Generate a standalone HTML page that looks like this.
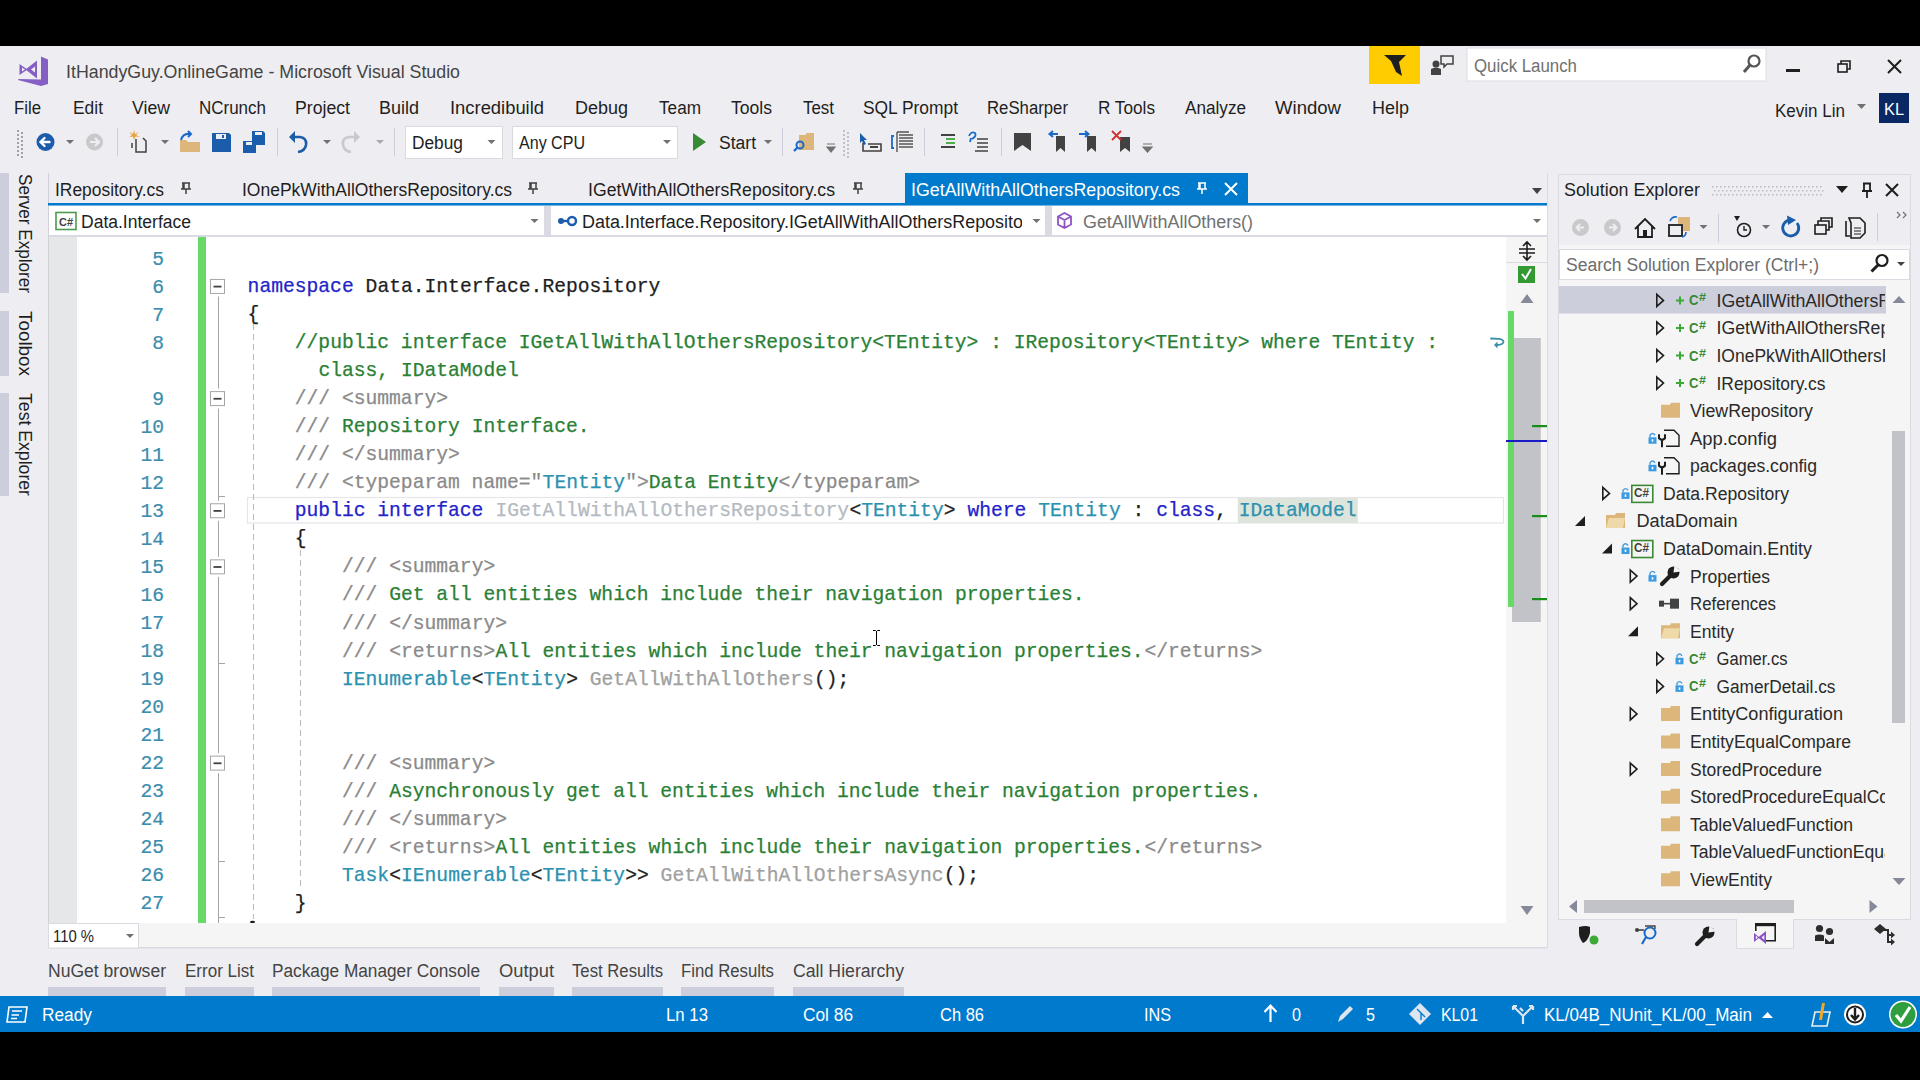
<!DOCTYPE html>
<html><head><meta charset="utf-8"><title>Visual Studio</title><style>html,body{margin:0;padding:0;width:1920px;height:1080px;overflow:hidden;background:#000;}</style></head><body>
<svg width="1920" height="1080" viewBox="0 0 1920 1080" style="position:absolute;left:0;top:0">
<rect x="0" y="0" width="1920" height="1080" fill="#000" />
<rect x="0" y="46" width="1920" height="950" fill="#EEEEF2" />
<rect x="0" y="996" width="1920" height="36" fill="#007ACC" />
<g fill="#865FC5" fill-rule="evenodd"><path d="M41 56.5 L48 59.5 L48 84 L41 86 L18 80 L18.5 79 L41 79.5 Z"/><path d="M19.5 64 L27.5 69.5 L19.5 75 Z M22 67.5 L22 71.5 L25 69.5 Z"/><path d="M25.5 69.5 L37 60.5 L37 78.5 Z M31 69.5 L35 66.5 L35 72.5 Z"/></g>
<text x="66" y="78" font-family="'Liberation Sans', sans-serif" font-size="18" fill="#444" textLength="394" lengthAdjust="spacingAndGlyphs" >ItHandyGuy.OnlineGame - Microsoft Visual Studio</text>
<rect x="1369" y="46" width="51" height="38" fill="#FFCC00" />
<path d="M1384 55 L1406 55 L1399 62 L1402 76 L1396 72 L1391 61 Z" fill="#1e1e1e"/>
<g fill="#424242"><circle cx="1436" cy="64" r="3.5"/><path d="M1431 75 L1431 69 Q1436 66 1441 69 L1441 75 Z"/></g>
<path d="M1441 56 L1453 56 L1453 64 L1447 64 L1444 67 L1444 64 L1441 64 Z" fill="none" stroke="#424242" stroke-width="1.5"/>
<rect x="1467" y="48" width="299" height="33" fill="#FFFFFF" stroke="#DCDCE4" stroke-width="1"/>
<text x="1474" y="72" font-family="'Liberation Sans', sans-serif" font-size="18" fill="#717171" textLength="103" lengthAdjust="spacingAndGlyphs" >Quick Launch</text>
<g stroke="#555" stroke-width="2.2" fill="none"><circle cx="1754" cy="61" r="5.5"/><path d="M1750 65 L1744 72" stroke-width="3"/></g>
<rect x="1786" y="69" width="14" height="3" fill="#1e1e1e" />
<g fill="none" stroke="#1e1e1e" stroke-width="1.6"><rect x="1838" y="64" width="9" height="8"/><path d="M1841 64 L1841 61 L1850 61 L1850 69 L1847 69"/></g>
<path d="M1888 60 L1901 73 M1901 60 L1888 73" stroke="#1e1e1e" stroke-width="2"/>
<text x="14" y="114" font-family="'Liberation Sans', sans-serif" font-size="18" fill="#1e1e1e" textLength="27" lengthAdjust="spacingAndGlyphs" >File</text>
<text x="73" y="114" font-family="'Liberation Sans', sans-serif" font-size="18" fill="#1e1e1e" textLength="30" lengthAdjust="spacingAndGlyphs" >Edit</text>
<text x="132" y="114" font-family="'Liberation Sans', sans-serif" font-size="18" fill="#1e1e1e" textLength="38" lengthAdjust="spacingAndGlyphs" >View</text>
<text x="199" y="114" font-family="'Liberation Sans', sans-serif" font-size="18" fill="#1e1e1e" textLength="67" lengthAdjust="spacingAndGlyphs" >NCrunch</text>
<text x="295" y="114" font-family="'Liberation Sans', sans-serif" font-size="18" fill="#1e1e1e" textLength="55" lengthAdjust="spacingAndGlyphs" >Project</text>
<text x="379" y="114" font-family="'Liberation Sans', sans-serif" font-size="18" fill="#1e1e1e" textLength="40" lengthAdjust="spacingAndGlyphs" >Build</text>
<text x="450" y="114" font-family="'Liberation Sans', sans-serif" font-size="18" fill="#1e1e1e" textLength="94" lengthAdjust="spacingAndGlyphs" >Incredibuild</text>
<text x="575" y="114" font-family="'Liberation Sans', sans-serif" font-size="18" fill="#1e1e1e" textLength="53" lengthAdjust="spacingAndGlyphs" >Debug</text>
<text x="659" y="114" font-family="'Liberation Sans', sans-serif" font-size="18" fill="#1e1e1e" textLength="42" lengthAdjust="spacingAndGlyphs" >Team</text>
<text x="731" y="114" font-family="'Liberation Sans', sans-serif" font-size="18" fill="#1e1e1e" textLength="41" lengthAdjust="spacingAndGlyphs" >Tools</text>
<text x="803" y="114" font-family="'Liberation Sans', sans-serif" font-size="18" fill="#1e1e1e" textLength="31" lengthAdjust="spacingAndGlyphs" >Test</text>
<text x="863" y="114" font-family="'Liberation Sans', sans-serif" font-size="18" fill="#1e1e1e" textLength="95" lengthAdjust="spacingAndGlyphs" >SQL Prompt</text>
<text x="987" y="114" font-family="'Liberation Sans', sans-serif" font-size="18" fill="#1e1e1e" textLength="81" lengthAdjust="spacingAndGlyphs" >ReSharper</text>
<text x="1098" y="114" font-family="'Liberation Sans', sans-serif" font-size="18" fill="#1e1e1e" textLength="57" lengthAdjust="spacingAndGlyphs" >R Tools</text>
<text x="1185" y="114" font-family="'Liberation Sans', sans-serif" font-size="18" fill="#1e1e1e" textLength="61" lengthAdjust="spacingAndGlyphs" >Analyze</text>
<text x="1275" y="114" font-family="'Liberation Sans', sans-serif" font-size="18" fill="#1e1e1e" textLength="66" lengthAdjust="spacingAndGlyphs" >Window</text>
<text x="1372" y="114" font-family="'Liberation Sans', sans-serif" font-size="18" fill="#1e1e1e" textLength="37" lengthAdjust="spacingAndGlyphs" >Help</text>
<text x="1775" y="117" font-family="'Liberation Sans', sans-serif" font-size="18" fill="#1e1e1e" textLength="70" lengthAdjust="spacingAndGlyphs" >Kevin Lin</text>
<path d="M1857 104 L1866 104 L1861.5 109 Z" fill="#717171"/>
<rect x="1879" y="93" width="30" height="30" fill="#0A2864" />
<text x="1884" y="115" font-family="'Liberation Sans', sans-serif" font-size="16" fill="#fff" textLength="20" lengthAdjust="spacingAndGlyphs" >KL</text>
<rect x="17" y="130" width="2" height="2" fill="#A0A0A8" />
<rect x="21" y="132" width="2" height="2" fill="#A0A0A8" />
<rect x="17" y="134" width="2" height="2" fill="#A0A0A8" />
<rect x="21" y="136" width="2" height="2" fill="#A0A0A8" />
<rect x="17" y="138" width="2" height="2" fill="#A0A0A8" />
<rect x="21" y="140" width="2" height="2" fill="#A0A0A8" />
<rect x="17" y="142" width="2" height="2" fill="#A0A0A8" />
<rect x="21" y="144" width="2" height="2" fill="#A0A0A8" />
<rect x="17" y="146" width="2" height="2" fill="#A0A0A8" />
<rect x="21" y="148" width="2" height="2" fill="#A0A0A8" />
<rect x="17" y="150" width="2" height="2" fill="#A0A0A8" />
<rect x="21" y="152" width="2" height="2" fill="#A0A0A8" />
<rect x="17" y="154" width="2" height="2" fill="#A0A0A8" />
<rect x="21" y="156" width="2" height="2" fill="#A0A0A8" />
<circle cx="45.5" cy="142" r="9" fill="#1B5CAB"/>
<path d="M49.5 142 L41 142 M44.5 138 L40.5 142 L44.5 146" stroke="#fff" stroke-width="2.4" fill="none" stroke-linecap="round"/>
<path d="M66 140 L74 140 L70 144 Z" fill="#717171"/>
<circle cx="94.5" cy="142" r="8.5" fill="#C9C9CC"/>
<path d="M90 142 L98.5 142 M95 138 L99 142 L95 146" stroke="#EEEEF2" stroke-width="2.2" fill="none"/>
<rect x="117" y="128" width="1" height="28" fill="#CCCEDB" />
<g fill="none" stroke="#424242" stroke-width="1.5"><path d="M136 139 L136 152 L146 152 L146 141 L143 138"/><path d="M132 143 L132 148"/></g>
<path d="M134 130 L135 134 L139 132 L136 135 L140 137 L135.5 136.5 L134 140 L133 136.5 L129 137 L132 135 L129 132 L133 134 Z" fill="#E8A33C"/>
<path d="M161 140 L169 140 L165 144 Z" fill="#717171"/>
<path d="M180 140 L186 140 L188 142 L200 142 L200 152 L180 152 Z" fill="#DCB67A"/>
<path d="M181 140 Q183 133 190 134 M188 131 L191 134 L188 137" stroke="#1B6AC9" stroke-width="2" fill="none"/>
<path d="M212 133 L229 133 L231 135 L231 152 L212 152 Z" fill="#1B5CAB"/><rect x="216" y="134" width="10" height="5" fill="#EEEEF2"/><rect x="222" y="135" width="2" height="3" fill="#1B5CAB"/>
<path d="M243 141 L256 141 L256 153 L243 153 Z" fill="#1B5CAB"/><rect x="246" y="142" width="7" height="3" fill="#EEEEF2"/>
<path d="M252 131 L263 131 L265 133 L265 145 L252 145 Z" fill="#1B5CAB"/><rect x="255" y="132" width="7" height="3" fill="#EEEEF2"/>
<rect x="277" y="128" width="1" height="28" fill="#CCCEDB" />
<path d="M292 137 L300 137 Q307 138 306 145 Q305 151 298 152" stroke="#1B5CAB" stroke-width="2.6" fill="none"/><path d="M289 137 L295 131 L295 143 Z" fill="#1B5CAB"/>
<path d="M323 140 L331 140 L327 144 Z" fill="#717171"/>
<path d="M357 137 L349 137 Q342 138 343 145 Q344 151 351 152" stroke="#C9C9CC" stroke-width="2.6" fill="none"/><path d="M360 137 L354 131 L354 143 Z" fill="#C9C9CC"/>
<path d="M376 140 L384 140 L380 144 Z" fill="#A8A8AD"/>
<rect x="394" y="128" width="1" height="28" fill="#CCCEDB" />
<rect x="405.5" y="126.5" width="97" height="32" fill="#FFFFFF" stroke="#D9D9E0"/>
<text x="412" y="149" font-family="'Liberation Sans', sans-serif" font-size="18" fill="#1e1e1e" textLength="51" lengthAdjust="spacingAndGlyphs" >Debug</text>
<path d="M487.5 140 L495.5 140 L491.5 144 Z" fill="#717171"/>
<rect x="512.5" y="126.5" width="165" height="32" fill="#FFFFFF" stroke="#D9D9E0"/>
<text x="519" y="149" font-family="'Liberation Sans', sans-serif" font-size="18" fill="#1e1e1e" textLength="66" lengthAdjust="spacingAndGlyphs" >Any CPU</text>
<path d="M663 140 L671 140 L667 144 Z" fill="#717171"/>
<path d="M693 133 L706 142 L693 151 Z" fill="#388A34"/>
<text x="719" y="149" font-family="'Liberation Sans', sans-serif" font-size="18" fill="#1e1e1e" textLength="37" lengthAdjust="spacingAndGlyphs" >Start</text>
<path d="M764 140 L772 140 L768 144 Z" fill="#717171"/>
<rect x="782" y="128" width="1" height="28" fill="#CCCEDB" />
<path d="M799 135 L805 135 L807 133 L814 133 L814 150 L799 150 Z" fill="#DCB67A"/>
<circle cx="800" cy="145" r="3.5" fill="none" stroke="#1B6AC9" stroke-width="2"/><path d="M797.5 147.5 L794 151" stroke="#1B6AC9" stroke-width="2.4"/>
<path d="M827 144 L835 144 M827 147 L835 147 L831 152 Z" stroke="#717171" stroke-width="1.2" fill="#717171"/>
<rect x="843" y="130" width="2" height="2" fill="#C0C0C8" />
<rect x="847" y="132" width="2" height="2" fill="#C0C0C8" />
<rect x="843" y="134" width="2" height="2" fill="#C0C0C8" />
<rect x="847" y="136" width="2" height="2" fill="#C0C0C8" />
<rect x="843" y="138" width="2" height="2" fill="#C0C0C8" />
<rect x="847" y="140" width="2" height="2" fill="#C0C0C8" />
<rect x="843" y="142" width="2" height="2" fill="#C0C0C8" />
<rect x="847" y="144" width="2" height="2" fill="#C0C0C8" />
<rect x="843" y="146" width="2" height="2" fill="#C0C0C8" />
<rect x="847" y="148" width="2" height="2" fill="#C0C0C8" />
<rect x="843" y="150" width="2" height="2" fill="#C0C0C8" />
<rect x="847" y="152" width="2" height="2" fill="#C0C0C8" />
<rect x="843" y="154" width="2" height="2" fill="#C0C0C8" />
<rect x="847" y="156" width="2" height="2" fill="#C0C0C8" />
<path d="M860 133 L867 140 L864 140 L866 144 L864 145 L862 141 L860 143 Z" fill="#1B5CAB"/>
<path d="M863 143 L863 151 L881 151 L881 144 L868 144" fill="none" stroke="#424242" stroke-width="1.6"/><rect x="870" y="146" width="8" height="2" fill="#424242"/>
<path d="M894 136 L892 136 L892 148 L894 148" stroke="#1B6AC9" stroke-width="1.8" fill="none"/><path d="M897 132 L909 132 M899 135 L913 135 M899 138 L913 138 M899 141 L913 141 M899 144 L913 144 M899 147 L913 147 M897 132 L897 152" stroke="#555" stroke-width="1.4"/>
<rect x="924" y="128" width="1" height="28" fill="#CCCEDB" />
<path d="M941 135 L955 135 M946 139 L955 139 M946 143 L955 143 M941 147 L955 147" stroke="#424242" stroke-width="1.8"/><path d="M946 139 L955 139 M946 143 L955 143" stroke="#4FAF4F" stroke-width="1.8"/>
<path d="M969 136 Q971 131 975 133 Q977 136 972 139 M971 138 L970 142" stroke="#1B6AC9" stroke-width="1.8" fill="none"/><path d="M977 139 L988 139 M977 143 L988 143 M977 147 L988 147 M975 151 L988 151" stroke="#424242" stroke-width="1.6"/>
<rect x="1001" y="128" width="1" height="28" fill="#CCCEDB" />
<path d="M1014 133 L1031 133 L1031 151 L1022.5 145 L1014 151 Z" fill="#424242"/>
<path d="M1056 136 L1065 136 L1065 152 L1060.5 148 L1056 152 Z" fill="#424242"/><path d="M1058 134 L1050 134 M1053 131 L1049.5 134 L1053 137" stroke="#1B6AC9" stroke-width="2" fill="none"/>
<path d="M1087 136 L1096 136 L1096 152 L1091.5 148 L1087 152 Z" fill="#424242"/><path d="M1079 134 L1088 134 M1085 131 L1088.5 134 L1085 137" stroke="#1B6AC9" stroke-width="2" fill="none"/>
<path d="M1120 137 L1130 137 L1130 152 L1125 148 L1120 152 Z" fill="#424242"/><path d="M1112 131 L1121 140 M1121 131 L1112 140" stroke="#D03030" stroke-width="1.8"/>
<path d="M1143 144 L1152 144 M1143 147 L1152 147 L1147.5 152 Z" stroke="#717171" stroke-width="1.2" fill="#717171"/>
<rect x="0" y="173" width="9" height="120" fill="#CCCEDB" />
<rect x="0" y="311" width="9" height="65" fill="#CCCEDB" />
<rect x="0" y="393" width="9" height="103" fill="#CCCEDB" />
<text transform="translate(19,174) rotate(90)" font-family="'Liberation Sans', sans-serif" font-size="18" fill="#1e1e1e" textLength="119" lengthAdjust="spacingAndGlyphs">Server Explorer</text>
<text transform="translate(19,311) rotate(90)" font-family="'Liberation Sans', sans-serif" font-size="18" fill="#1e1e1e" textLength="65" lengthAdjust="spacingAndGlyphs">Toolbox</text>
<text transform="translate(19,393) rotate(90)" font-family="'Liberation Sans', sans-serif" font-size="18" fill="#1e1e1e" textLength="103" lengthAdjust="spacingAndGlyphs">Test Explorer</text>
<rect x="48" y="173" width="1" height="775" fill="#CFD0D8" />
<text x="55" y="196" font-family="'Liberation Sans', sans-serif" font-size="18" fill="#1e1e1e" textLength="109" lengthAdjust="spacingAndGlyphs" >IRepository.cs</text>
<path d="M182 183 L190 183 M183 183 L183 189 M189 183 L189 189 M181 189 L191 189 M186 189 L186 194 M184 183 L184 189" stroke="#424242" stroke-width="1.5" fill="none"/>
<text x="242" y="196" font-family="'Liberation Sans', sans-serif" font-size="18" fill="#1e1e1e" textLength="270" lengthAdjust="spacingAndGlyphs" >IOnePkWithAllOthersRepository.cs</text>
<path d="M529 183 L537 183 M530 183 L530 189 M536 183 L536 189 M528 189 L538 189 M533 189 L533 194 M531 183 L531 189" stroke="#424242" stroke-width="1.5" fill="none"/>
<text x="588" y="196" font-family="'Liberation Sans', sans-serif" font-size="18" fill="#1e1e1e" textLength="247" lengthAdjust="spacingAndGlyphs" >IGetWithAllOthersRepository.cs</text>
<path d="M854 183 L862 183 M855 183 L855 189 M861 183 L861 189 M853 189 L863 189 M858 189 L858 194 M856 183 L856 189" stroke="#424242" stroke-width="1.5" fill="none"/>
<rect x="905" y="173" width="343" height="32" fill="#007ACC" />
<text x="911" y="196" font-family="'Liberation Sans', sans-serif" font-size="18" fill="#FFFFFF" textLength="269" lengthAdjust="spacingAndGlyphs" >IGetAllWithAllOthersRepository.cs</text>
<path d="M1198 183 L1206 183 M1199 183 L1199 189 M1205 183 L1205 189 M1197 189 L1207 189 M1202 189 L1202 194 M1200 183 L1200 189" stroke="#FFFFFF" stroke-width="1.5" fill="none"/>
<path d="M1225 183 L1237 195 M1237 183 L1225 195" stroke="#fff" stroke-width="2"/>
<path d="M1532 188 L1542 188 L1537 194 Z" fill="#424242"/>
<rect x="48" y="203" width="1500" height="2.5" fill="#007ACC" />
<rect x="49" y="206" width="1499" height="31" fill="#FFFFFF" />
<rect x="49" y="235" width="1499" height="2" fill="#DADAE2" />
<rect x="544" y="206" width="7" height="29" fill="#DADAE2" />
<rect x="1045" y="206" width="7" height="29" fill="#DADAE2" />
<rect x="56" y="212.5" width="20" height="17" fill="#fff" stroke="#4E9A4E" stroke-width="1.6"/>
<text x="59" y="226" font-family="'Liberation Sans', sans-serif" font-size="11" fill="#424242" textLength="14" lengthAdjust="spacingAndGlyphs" font-weight="bold">C#</text>
<text x="81" y="228" font-family="'Liberation Sans', sans-serif" font-size="18" fill="#1e1e1e" textLength="110" lengthAdjust="spacingAndGlyphs" >Data.Interface</text>
<path d="M530.5 219 L538.5 219 L534.5 223 Z" fill="#717171"/>
<circle cx="561" cy="221" r="3" fill="#1B5CAB"/><path d="M561 221 L569 221" stroke="#1B5CAB" stroke-width="2.4"/><circle cx="572" cy="221" r="4" fill="none" stroke="#1B5CAB" stroke-width="2.4"/>
<text x="582" y="228" font-family="'Liberation Sans', sans-serif" font-size="18" fill="#1e1e1e" textLength="441" lengthAdjust="spacingAndGlyphs" >Data.Interface.Repository.IGetAllWithAllOthersReposito</text>
<rect x="1022" y="207" width="20" height="27" fill="#FFFFFF" />
<path d="M1032.5 219 L1040.5 219 L1036.5 223 Z" fill="#717171"/>
<path d="M1064.5 213 L1071 216.5 L1071 224.5 L1064.5 228 L1058 224.5 L1058 216.5 Z M1058 216.5 L1064.5 220 L1071 216.5 M1064.5 220 L1064.5 228" fill="none" stroke="#8E52C4" stroke-width="1.8"/>
<text x="1083" y="228" font-family="'Liberation Sans', sans-serif" font-size="18" fill="#717171" textLength="170" lengthAdjust="spacingAndGlyphs" >GetAllWithAllOthers()</text>
<path d="M1533 219 L1541 219 L1537 223 Z" fill="#717171"/>
<rect x="49" y="237" width="28" height="686" fill="#E6E7E8" />
<rect x="77" y="237" width="1429" height="686" fill="#FFFFFF" />
<rect x="198" y="237" width="8" height="686" fill="#66D966" />
<rect x="247.5" y="497.5" width="1256" height="25.5" fill="none" stroke="#E5E5EA" stroke-width="1.2"/>
<rect x="1237.8" y="498" width="120.0" height="25" fill="#DDE4DC" />
<path d="M253.5 324 L253.5 919" stroke="#BDBDBD" stroke-width="1.1" stroke-dasharray="6,4"/>
<path d="M300.5 550 L300.5 888" stroke="#BDBDBD" stroke-width="1.1" stroke-dasharray="6,4"/>
<ellipse cx="252.5" cy="922" rx="2.5" ry="1.3" fill="#1e1e1e"/>
<text x="164" y="264.50" font-family="'Liberation Mono', monospace" font-size="19.65" fill="#3A8DAD" stroke="#3A8DAD" stroke-width="0.2" text-anchor="end">5</text>
<text x="164" y="292.54" font-family="'Liberation Mono', monospace" font-size="19.65" fill="#3A8DAD" stroke="#3A8DAD" stroke-width="0.2" text-anchor="end">6</text>
<text x="247.60" y="292.04" font-family="'Liberation Mono', monospace" font-size="19.65" fill="#2323C8" stroke="#2323C8" stroke-width="0.25" xml:space="preserve">namespace</text>
<text x="365.60" y="292.04" font-family="'Liberation Mono', monospace" font-size="19.65" fill="#1E1E1E" stroke="#1E1E1E" stroke-width="0.25" xml:space="preserve">Data.Interface.Repository</text>
<text x="164" y="320.58" font-family="'Liberation Mono', monospace" font-size="19.65" fill="#3A8DAD" stroke="#3A8DAD" stroke-width="0.2" text-anchor="end">7</text>
<text x="247.60" y="320.08" font-family="'Liberation Mono', monospace" font-size="19.65" fill="#1E1E1E" stroke="#1E1E1E" stroke-width="0.25" xml:space="preserve">{</text>
<text x="164" y="348.62" font-family="'Liberation Mono', monospace" font-size="19.65" fill="#3A8DAD" stroke="#3A8DAD" stroke-width="0.2" text-anchor="end">8</text>
<text x="294.80" y="348.12" font-family="'Liberation Mono', monospace" font-size="19.65" fill="#2A8035" stroke="#2A8035" stroke-width="0.25" xml:space="preserve">//public interface IGetAllWithAllOthersRepository&lt;TEntity&gt; : IRepository&lt;TEntity&gt; where TEntity :</text>
<text x="318.40" y="376.16" font-family="'Liberation Mono', monospace" font-size="19.65" fill="#2A8035" stroke="#2A8035" stroke-width="0.25" xml:space="preserve">class, IDataModel</text>
<text x="164" y="404.70" font-family="'Liberation Mono', monospace" font-size="19.65" fill="#3A8DAD" stroke="#3A8DAD" stroke-width="0.2" text-anchor="end">9</text>
<text x="294.80" y="404.20" font-family="'Liberation Mono', monospace" font-size="19.65" fill="#8A8A8A" stroke="#8A8A8A" stroke-width="0.25" xml:space="preserve">/// &lt;summary&gt;</text>
<text x="164" y="432.74" font-family="'Liberation Mono', monospace" font-size="19.65" fill="#3A8DAD" stroke="#3A8DAD" stroke-width="0.2" text-anchor="end">10</text>
<text x="294.80" y="432.24" font-family="'Liberation Mono', monospace" font-size="19.65" fill="#8A8A8A" stroke="#8A8A8A" stroke-width="0.25" xml:space="preserve">///</text>
<text x="342.00" y="432.24" font-family="'Liberation Mono', monospace" font-size="19.65" fill="#2A8035" stroke="#2A8035" stroke-width="0.25" xml:space="preserve">Repository Interface.</text>
<text x="164" y="460.78" font-family="'Liberation Mono', monospace" font-size="19.65" fill="#3A8DAD" stroke="#3A8DAD" stroke-width="0.2" text-anchor="end">11</text>
<text x="294.80" y="460.28" font-family="'Liberation Mono', monospace" font-size="19.65" fill="#8A8A8A" stroke="#8A8A8A" stroke-width="0.25" xml:space="preserve">/// &lt;/summary&gt;</text>
<text x="164" y="488.82" font-family="'Liberation Mono', monospace" font-size="19.65" fill="#3A8DAD" stroke="#3A8DAD" stroke-width="0.2" text-anchor="end">12</text>
<text x="294.80" y="488.32" font-family="'Liberation Mono', monospace" font-size="19.65" fill="#8A8A8A" stroke="#8A8A8A" stroke-width="0.25" xml:space="preserve">/// &lt;typeparam name=&quot;</text>
<text x="542.60" y="488.32" font-family="'Liberation Mono', monospace" font-size="19.65" fill="#2B91AF" stroke="#2B91AF" stroke-width="0.25" xml:space="preserve">TEntity</text>
<text x="625.20" y="488.32" font-family="'Liberation Mono', monospace" font-size="19.65" fill="#8A8A8A" stroke="#8A8A8A" stroke-width="0.25" xml:space="preserve">&quot;&gt;</text>
<text x="648.80" y="488.32" font-family="'Liberation Mono', monospace" font-size="19.65" fill="#2A8035" stroke="#2A8035" stroke-width="0.25" xml:space="preserve">Data Entity</text>
<text x="778.60" y="488.32" font-family="'Liberation Mono', monospace" font-size="19.65" fill="#8A8A8A" stroke="#8A8A8A" stroke-width="0.25" xml:space="preserve">&lt;/typeparam&gt;</text>
<text x="164" y="516.86" font-family="'Liberation Mono', monospace" font-size="19.65" fill="#3A8DAD" stroke="#3A8DAD" stroke-width="0.2" text-anchor="end">13</text>
<text x="294.80" y="516.36" font-family="'Liberation Mono', monospace" font-size="19.65" fill="#2323C8" stroke="#2323C8" stroke-width="0.25" xml:space="preserve">public interface</text>
<text x="495.40" y="516.36" font-family="'Liberation Mono', monospace" font-size="19.65" fill="#B4BAC2" stroke="#B4BAC2" stroke-width="0.25" xml:space="preserve">IGetAllWithAllOthersRepository</text>
<text x="849.40" y="516.36" font-family="'Liberation Mono', monospace" font-size="19.65" fill="#1E1E1E" stroke="#1E1E1E" stroke-width="0.25" xml:space="preserve">&lt;</text>
<text x="861.20" y="516.36" font-family="'Liberation Mono', monospace" font-size="19.65" fill="#2B91AF" stroke="#2B91AF" stroke-width="0.25" xml:space="preserve">TEntity</text>
<text x="943.80" y="516.36" font-family="'Liberation Mono', monospace" font-size="19.65" fill="#1E1E1E" stroke="#1E1E1E" stroke-width="0.25" xml:space="preserve">&gt;</text>
<text x="967.40" y="516.36" font-family="'Liberation Mono', monospace" font-size="19.65" fill="#2323C8" stroke="#2323C8" stroke-width="0.25" xml:space="preserve">where</text>
<text x="1038.20" y="516.36" font-family="'Liberation Mono', monospace" font-size="19.65" fill="#2B91AF" stroke="#2B91AF" stroke-width="0.25" xml:space="preserve">TEntity</text>
<text x="1132.60" y="516.36" font-family="'Liberation Mono', monospace" font-size="19.65" fill="#1E1E1E" stroke="#1E1E1E" stroke-width="0.25" xml:space="preserve">:</text>
<text x="1156.20" y="516.36" font-family="'Liberation Mono', monospace" font-size="19.65" fill="#2323C8" stroke="#2323C8" stroke-width="0.25" xml:space="preserve">class</text>
<text x="1215.20" y="516.36" font-family="'Liberation Mono', monospace" font-size="19.65" fill="#1E1E1E" stroke="#1E1E1E" stroke-width="0.25" xml:space="preserve">,</text>
<text x="1238.80" y="516.36" font-family="'Liberation Mono', monospace" font-size="19.65" fill="#2B91AF" stroke="#2B91AF" stroke-width="0.25" xml:space="preserve">IDataModel</text>
<text x="164" y="544.90" font-family="'Liberation Mono', monospace" font-size="19.65" fill="#3A8DAD" stroke="#3A8DAD" stroke-width="0.2" text-anchor="end">14</text>
<text x="294.80" y="544.40" font-family="'Liberation Mono', monospace" font-size="19.65" fill="#1E1E1E" stroke="#1E1E1E" stroke-width="0.25" xml:space="preserve">{</text>
<text x="164" y="572.94" font-family="'Liberation Mono', monospace" font-size="19.65" fill="#3A8DAD" stroke="#3A8DAD" stroke-width="0.2" text-anchor="end">15</text>
<text x="342.00" y="572.44" font-family="'Liberation Mono', monospace" font-size="19.65" fill="#8A8A8A" stroke="#8A8A8A" stroke-width="0.25" xml:space="preserve">/// &lt;summary&gt;</text>
<text x="164" y="600.98" font-family="'Liberation Mono', monospace" font-size="19.65" fill="#3A8DAD" stroke="#3A8DAD" stroke-width="0.2" text-anchor="end">16</text>
<text x="342.00" y="600.48" font-family="'Liberation Mono', monospace" font-size="19.65" fill="#8A8A8A" stroke="#8A8A8A" stroke-width="0.25" xml:space="preserve">///</text>
<text x="389.20" y="600.48" font-family="'Liberation Mono', monospace" font-size="19.65" fill="#2A8035" stroke="#2A8035" stroke-width="0.25" xml:space="preserve">Get all entities which include their navigation properties.</text>
<text x="164" y="629.02" font-family="'Liberation Mono', monospace" font-size="19.65" fill="#3A8DAD" stroke="#3A8DAD" stroke-width="0.2" text-anchor="end">17</text>
<text x="342.00" y="628.52" font-family="'Liberation Mono', monospace" font-size="19.65" fill="#8A8A8A" stroke="#8A8A8A" stroke-width="0.25" xml:space="preserve">/// &lt;/summary&gt;</text>
<text x="164" y="657.06" font-family="'Liberation Mono', monospace" font-size="19.65" fill="#3A8DAD" stroke="#3A8DAD" stroke-width="0.2" text-anchor="end">18</text>
<text x="342.00" y="656.56" font-family="'Liberation Mono', monospace" font-size="19.65" fill="#8A8A8A" stroke="#8A8A8A" stroke-width="0.25" xml:space="preserve">/// &lt;returns&gt;</text>
<text x="495.40" y="656.56" font-family="'Liberation Mono', monospace" font-size="19.65" fill="#2A8035" stroke="#2A8035" stroke-width="0.25" xml:space="preserve">All entities which include their navigation properties.</text>
<text x="1144.40" y="656.56" font-family="'Liberation Mono', monospace" font-size="19.65" fill="#8A8A8A" stroke="#8A8A8A" stroke-width="0.25" xml:space="preserve">&lt;/returns&gt;</text>
<text x="164" y="685.10" font-family="'Liberation Mono', monospace" font-size="19.65" fill="#3A8DAD" stroke="#3A8DAD" stroke-width="0.2" text-anchor="end">19</text>
<text x="342.00" y="684.60" font-family="'Liberation Mono', monospace" font-size="19.65" fill="#2B91AF" stroke="#2B91AF" stroke-width="0.25" xml:space="preserve">IEnumerable</text>
<text x="471.80" y="684.60" font-family="'Liberation Mono', monospace" font-size="19.65" fill="#1E1E1E" stroke="#1E1E1E" stroke-width="0.25" xml:space="preserve">&lt;</text>
<text x="483.60" y="684.60" font-family="'Liberation Mono', monospace" font-size="19.65" fill="#2B91AF" stroke="#2B91AF" stroke-width="0.25" xml:space="preserve">TEntity</text>
<text x="566.20" y="684.60" font-family="'Liberation Mono', monospace" font-size="19.65" fill="#1E1E1E" stroke="#1E1E1E" stroke-width="0.25" xml:space="preserve">&gt;</text>
<text x="589.80" y="684.60" font-family="'Liberation Mono', monospace" font-size="19.65" fill="#A0A0A0" stroke="#A0A0A0" stroke-width="0.25" xml:space="preserve">GetAllWithAllOthers</text>
<text x="814.00" y="684.60" font-family="'Liberation Mono', monospace" font-size="19.65" fill="#1E1E1E" stroke="#1E1E1E" stroke-width="0.25" xml:space="preserve">();</text>
<text x="164" y="713.14" font-family="'Liberation Mono', monospace" font-size="19.65" fill="#3A8DAD" stroke="#3A8DAD" stroke-width="0.2" text-anchor="end">20</text>
<text x="164" y="741.18" font-family="'Liberation Mono', monospace" font-size="19.65" fill="#3A8DAD" stroke="#3A8DAD" stroke-width="0.2" text-anchor="end">21</text>
<text x="164" y="769.22" font-family="'Liberation Mono', monospace" font-size="19.65" fill="#3A8DAD" stroke="#3A8DAD" stroke-width="0.2" text-anchor="end">22</text>
<text x="342.00" y="768.72" font-family="'Liberation Mono', monospace" font-size="19.65" fill="#8A8A8A" stroke="#8A8A8A" stroke-width="0.25" xml:space="preserve">/// &lt;summary&gt;</text>
<text x="164" y="797.26" font-family="'Liberation Mono', monospace" font-size="19.65" fill="#3A8DAD" stroke="#3A8DAD" stroke-width="0.2" text-anchor="end">23</text>
<text x="342.00" y="796.76" font-family="'Liberation Mono', monospace" font-size="19.65" fill="#8A8A8A" stroke="#8A8A8A" stroke-width="0.25" xml:space="preserve">///</text>
<text x="389.20" y="796.76" font-family="'Liberation Mono', monospace" font-size="19.65" fill="#2A8035" stroke="#2A8035" stroke-width="0.25" xml:space="preserve">Asynchronously get all entities which include their navigation properties.</text>
<text x="164" y="825.30" font-family="'Liberation Mono', monospace" font-size="19.65" fill="#3A8DAD" stroke="#3A8DAD" stroke-width="0.2" text-anchor="end">24</text>
<text x="342.00" y="824.80" font-family="'Liberation Mono', monospace" font-size="19.65" fill="#8A8A8A" stroke="#8A8A8A" stroke-width="0.25" xml:space="preserve">/// &lt;/summary&gt;</text>
<text x="164" y="853.34" font-family="'Liberation Mono', monospace" font-size="19.65" fill="#3A8DAD" stroke="#3A8DAD" stroke-width="0.2" text-anchor="end">25</text>
<text x="342.00" y="852.84" font-family="'Liberation Mono', monospace" font-size="19.65" fill="#8A8A8A" stroke="#8A8A8A" stroke-width="0.25" xml:space="preserve">/// &lt;returns&gt;</text>
<text x="495.40" y="852.84" font-family="'Liberation Mono', monospace" font-size="19.65" fill="#2A8035" stroke="#2A8035" stroke-width="0.25" xml:space="preserve">All entities which include their navigation properties.</text>
<text x="1144.40" y="852.84" font-family="'Liberation Mono', monospace" font-size="19.65" fill="#8A8A8A" stroke="#8A8A8A" stroke-width="0.25" xml:space="preserve">&lt;/returns&gt;</text>
<text x="164" y="881.38" font-family="'Liberation Mono', monospace" font-size="19.65" fill="#3A8DAD" stroke="#3A8DAD" stroke-width="0.2" text-anchor="end">26</text>
<text x="342.00" y="880.88" font-family="'Liberation Mono', monospace" font-size="19.65" fill="#2B91AF" stroke="#2B91AF" stroke-width="0.25" xml:space="preserve">Task</text>
<text x="389.20" y="880.88" font-family="'Liberation Mono', monospace" font-size="19.65" fill="#1E1E1E" stroke="#1E1E1E" stroke-width="0.25" xml:space="preserve">&lt;</text>
<text x="401.00" y="880.88" font-family="'Liberation Mono', monospace" font-size="19.65" fill="#2B91AF" stroke="#2B91AF" stroke-width="0.25" xml:space="preserve">IEnumerable</text>
<text x="530.80" y="880.88" font-family="'Liberation Mono', monospace" font-size="19.65" fill="#1E1E1E" stroke="#1E1E1E" stroke-width="0.25" xml:space="preserve">&lt;</text>
<text x="542.60" y="880.88" font-family="'Liberation Mono', monospace" font-size="19.65" fill="#2B91AF" stroke="#2B91AF" stroke-width="0.25" xml:space="preserve">TEntity</text>
<text x="625.20" y="880.88" font-family="'Liberation Mono', monospace" font-size="19.65" fill="#1E1E1E" stroke="#1E1E1E" stroke-width="0.25" xml:space="preserve">&gt;&gt;</text>
<text x="660.60" y="880.88" font-family="'Liberation Mono', monospace" font-size="19.65" fill="#A0A0A0" stroke="#A0A0A0" stroke-width="0.25" xml:space="preserve">GetAllWithAllOthersAsync</text>
<text x="943.80" y="880.88" font-family="'Liberation Mono', monospace" font-size="19.65" fill="#1E1E1E" stroke="#1E1E1E" stroke-width="0.25" xml:space="preserve">();</text>
<text x="164" y="909.42" font-family="'Liberation Mono', monospace" font-size="19.65" fill="#3A8DAD" stroke="#3A8DAD" stroke-width="0.2" text-anchor="end">27</text>
<text x="294.80" y="908.92" font-family="'Liberation Mono', monospace" font-size="19.65" fill="#1E1E1E" stroke="#1E1E1E" stroke-width="0.25" xml:space="preserve">}</text>
<path d="M218.5 296.44 L218.5 388.59999999999997" stroke="#A5A5A5" stroke-width="1"/>
<path d="M218.5 408.59999999999997 L218.5 500.76" stroke="#A5A5A5" stroke-width="1"/>
<path d="M218.5 520.76 L218.5 556.84" stroke="#A5A5A5" stroke-width="1"/>
<path d="M218.5 576.84 L218.5 753.12" stroke="#A5A5A5" stroke-width="1"/>
<path d="M218.5 773.12 L218.5 923" stroke="#A5A5A5" stroke-width="1"/>
<rect x="210.5" y="279.44" width="14" height="14" fill="#fff" stroke="#A5A5A5" stroke-width="1"/>
<rect x="213.5" y="285.69" width="8" height="1.8" fill="#424242"/>
<rect x="210.5" y="391.59999999999997" width="14" height="14" fill="#fff" stroke="#A5A5A5" stroke-width="1"/>
<rect x="213.5" y="397.84999999999997" width="8" height="1.8" fill="#424242"/>
<rect x="210.5" y="503.76" width="14" height="14" fill="#fff" stroke="#A5A5A5" stroke-width="1"/>
<rect x="213.5" y="510.01" width="8" height="1.8" fill="#424242"/>
<rect x="210.5" y="559.84" width="14" height="14" fill="#fff" stroke="#A5A5A5" stroke-width="1"/>
<rect x="213.5" y="566.09" width="8" height="1.8" fill="#424242"/>
<rect x="210.5" y="756.12" width="14" height="14" fill="#fff" stroke="#A5A5A5" stroke-width="1"/>
<rect x="213.5" y="762.37" width="8" height="1.8" fill="#424242"/>
<path d="M218.5 496.5 L225 496.5" stroke="#A5A5A5" stroke-width="1"/>
<path d="M218.5 663.5 L225 663.5" stroke="#A5A5A5" stroke-width="1"/>
<path d="M218.5 861.5 L225 861.5" stroke="#A5A5A5" stroke-width="1"/>
<path d="M218.5 917.5 L225 917.5" stroke="#A5A5A5" stroke-width="1"/>
<path d="M1491 338.5 L1499 338.8 Q1503.5 339.5 1503.5 341.8 Q1503 344.5 1497 345" stroke="#3A8FA8" stroke-width="1.8" fill="none" stroke-linecap="round"/><path d="M1494 345 L1497.5 341.5 L1497.5 348.5 Z" fill="#3A8FA8"/>
<path d="M873 630.5 L875.5 630.5 L876.5 631.5 L877.5 630.5 L880 630.5 M876.5 631 L876.5 645 M873 645.5 L875.5 645.5 L876.5 644.5 L877.5 645.5 L880 645.5" stroke="#000" stroke-width="1" fill="none"/>
<rect x="1506" y="237" width="41" height="686" fill="#F5F5F5" />
<rect x="1506" y="262" width="41" height="1" fill="#DADAE2" />
<path d="M1519 249 L1535 249 M1519 253 L1535 253 M1527 243 L1527 259 M1523 246 L1527 242 L1531 246 M1523 256 L1527 260 L1531 256" stroke="#1e1e1e" stroke-width="1.6" fill="none"/>
<rect x="1518" y="266" width="17" height="17" fill="#339933" />
<path d="M1522 274 L1525.5 278.5 L1531 269" stroke="#fff" stroke-width="2" fill="none"/>
<path d="M1520.5 303 L1527 294 L1533.5 303 Z" fill="#868999"/>
<rect x="1512" y="338" width="28.8" height="284" fill="#C2C3C9" />
<rect x="1508" y="311" width="6" height="296" fill="#66D966" />
<rect x="1532" y="425" width="15" height="2.2" fill="#178E17" />
<rect x="1506" y="440" width="41" height="2" fill="#1A1AC8" />
<rect x="1532" y="515" width="15" height="2.2" fill="#178E17" />
<rect x="1532" y="598" width="15" height="2.2" fill="#178E17" />
<path d="M1520.5 906 L1527 915 L1533.5 906 Z" fill="#868999"/>
<rect x="49" y="923" width="1498" height="25" fill="#F5F5F5" />
<rect x="49" y="947" width="1498" height="1.5" fill="#DADAE2" />
<rect x="48.5" y="923.5" width="90" height="24.5" fill="#FFFFFF" stroke="#DADAE2"/>
<text x="53" y="942" font-family="'Liberation Sans', sans-serif" font-size="17" fill="#1e1e1e" textLength="41" lengthAdjust="spacingAndGlyphs" >110 %</text>
<path d="M126 934 L134 934 L130 938 Z" fill="#717171"/>
<rect x="1547" y="173" width="1" height="775" fill="#DADAE2" />
<text x="48" y="977" font-family="'Liberation Sans', sans-serif" font-size="18" fill="#444" textLength="118" lengthAdjust="spacingAndGlyphs" >NuGet browser</text>
<rect x="48" y="987" width="118" height="9" fill="#CCCEDB" />
<text x="185" y="977" font-family="'Liberation Sans', sans-serif" font-size="18" fill="#444" textLength="69" lengthAdjust="spacingAndGlyphs" >Error List</text>
<rect x="185" y="987" width="69" height="9" fill="#CCCEDB" />
<text x="272" y="977" font-family="'Liberation Sans', sans-serif" font-size="18" fill="#444" textLength="208" lengthAdjust="spacingAndGlyphs" >Package Manager Console</text>
<rect x="272" y="987" width="208" height="9" fill="#CCCEDB" />
<text x="499" y="977" font-family="'Liberation Sans', sans-serif" font-size="18" fill="#444" textLength="55" lengthAdjust="spacingAndGlyphs" >Output</text>
<rect x="499" y="987" width="55" height="9" fill="#CCCEDB" />
<text x="572" y="977" font-family="'Liberation Sans', sans-serif" font-size="18" fill="#444" textLength="91" lengthAdjust="spacingAndGlyphs" >Test Results</text>
<rect x="572" y="987" width="91" height="9" fill="#CCCEDB" />
<text x="681" y="977" font-family="'Liberation Sans', sans-serif" font-size="18" fill="#444" textLength="93" lengthAdjust="spacingAndGlyphs" >Find Results</text>
<rect x="681" y="987" width="93" height="9" fill="#CCCEDB" />
<text x="793" y="977" font-family="'Liberation Sans', sans-serif" font-size="18" fill="#444" textLength="111" lengthAdjust="spacingAndGlyphs" >Call Hierarchy</text>
<rect x="793" y="987" width="111" height="9" fill="#CCCEDB" />
<rect x="1558.5" y="174.5" width="352" height="745" fill="#F5F5F5" stroke="#DADAE2"/>
<rect x="1559" y="175" width="351" height="34" fill="#EEEEF2" />
<text x="1564" y="196" font-family="'Liberation Sans', sans-serif" font-size="18" fill="#1e1e1e" textLength="136" lengthAdjust="spacingAndGlyphs" >Solution Explorer</text>
<rect x="1712" y="186" width="1.5" height="1.5" fill="#B8B8C4" />
<rect x="1714" y="190" width="1.5" height="1.5" fill="#B8B8C4" />
<rect x="1712" y="194" width="1.5" height="1.5" fill="#B8B8C4" />
<rect x="1716" y="186" width="1.5" height="1.5" fill="#B8B8C4" />
<rect x="1718" y="190" width="1.5" height="1.5" fill="#B8B8C4" />
<rect x="1716" y="194" width="1.5" height="1.5" fill="#B8B8C4" />
<rect x="1720" y="186" width="1.5" height="1.5" fill="#B8B8C4" />
<rect x="1722" y="190" width="1.5" height="1.5" fill="#B8B8C4" />
<rect x="1720" y="194" width="1.5" height="1.5" fill="#B8B8C4" />
<rect x="1724" y="186" width="1.5" height="1.5" fill="#B8B8C4" />
<rect x="1726" y="190" width="1.5" height="1.5" fill="#B8B8C4" />
<rect x="1724" y="194" width="1.5" height="1.5" fill="#B8B8C4" />
<rect x="1728" y="186" width="1.5" height="1.5" fill="#B8B8C4" />
<rect x="1730" y="190" width="1.5" height="1.5" fill="#B8B8C4" />
<rect x="1728" y="194" width="1.5" height="1.5" fill="#B8B8C4" />
<rect x="1732" y="186" width="1.5" height="1.5" fill="#B8B8C4" />
<rect x="1734" y="190" width="1.5" height="1.5" fill="#B8B8C4" />
<rect x="1732" y="194" width="1.5" height="1.5" fill="#B8B8C4" />
<rect x="1736" y="186" width="1.5" height="1.5" fill="#B8B8C4" />
<rect x="1738" y="190" width="1.5" height="1.5" fill="#B8B8C4" />
<rect x="1736" y="194" width="1.5" height="1.5" fill="#B8B8C4" />
<rect x="1740" y="186" width="1.5" height="1.5" fill="#B8B8C4" />
<rect x="1742" y="190" width="1.5" height="1.5" fill="#B8B8C4" />
<rect x="1740" y="194" width="1.5" height="1.5" fill="#B8B8C4" />
<rect x="1744" y="186" width="1.5" height="1.5" fill="#B8B8C4" />
<rect x="1746" y="190" width="1.5" height="1.5" fill="#B8B8C4" />
<rect x="1744" y="194" width="1.5" height="1.5" fill="#B8B8C4" />
<rect x="1748" y="186" width="1.5" height="1.5" fill="#B8B8C4" />
<rect x="1750" y="190" width="1.5" height="1.5" fill="#B8B8C4" />
<rect x="1748" y="194" width="1.5" height="1.5" fill="#B8B8C4" />
<rect x="1752" y="186" width="1.5" height="1.5" fill="#B8B8C4" />
<rect x="1754" y="190" width="1.5" height="1.5" fill="#B8B8C4" />
<rect x="1752" y="194" width="1.5" height="1.5" fill="#B8B8C4" />
<rect x="1756" y="186" width="1.5" height="1.5" fill="#B8B8C4" />
<rect x="1758" y="190" width="1.5" height="1.5" fill="#B8B8C4" />
<rect x="1756" y="194" width="1.5" height="1.5" fill="#B8B8C4" />
<rect x="1760" y="186" width="1.5" height="1.5" fill="#B8B8C4" />
<rect x="1762" y="190" width="1.5" height="1.5" fill="#B8B8C4" />
<rect x="1760" y="194" width="1.5" height="1.5" fill="#B8B8C4" />
<rect x="1764" y="186" width="1.5" height="1.5" fill="#B8B8C4" />
<rect x="1766" y="190" width="1.5" height="1.5" fill="#B8B8C4" />
<rect x="1764" y="194" width="1.5" height="1.5" fill="#B8B8C4" />
<rect x="1768" y="186" width="1.5" height="1.5" fill="#B8B8C4" />
<rect x="1770" y="190" width="1.5" height="1.5" fill="#B8B8C4" />
<rect x="1768" y="194" width="1.5" height="1.5" fill="#B8B8C4" />
<rect x="1772" y="186" width="1.5" height="1.5" fill="#B8B8C4" />
<rect x="1774" y="190" width="1.5" height="1.5" fill="#B8B8C4" />
<rect x="1772" y="194" width="1.5" height="1.5" fill="#B8B8C4" />
<rect x="1776" y="186" width="1.5" height="1.5" fill="#B8B8C4" />
<rect x="1778" y="190" width="1.5" height="1.5" fill="#B8B8C4" />
<rect x="1776" y="194" width="1.5" height="1.5" fill="#B8B8C4" />
<rect x="1780" y="186" width="1.5" height="1.5" fill="#B8B8C4" />
<rect x="1782" y="190" width="1.5" height="1.5" fill="#B8B8C4" />
<rect x="1780" y="194" width="1.5" height="1.5" fill="#B8B8C4" />
<rect x="1784" y="186" width="1.5" height="1.5" fill="#B8B8C4" />
<rect x="1786" y="190" width="1.5" height="1.5" fill="#B8B8C4" />
<rect x="1784" y="194" width="1.5" height="1.5" fill="#B8B8C4" />
<rect x="1788" y="186" width="1.5" height="1.5" fill="#B8B8C4" />
<rect x="1790" y="190" width="1.5" height="1.5" fill="#B8B8C4" />
<rect x="1788" y="194" width="1.5" height="1.5" fill="#B8B8C4" />
<rect x="1792" y="186" width="1.5" height="1.5" fill="#B8B8C4" />
<rect x="1794" y="190" width="1.5" height="1.5" fill="#B8B8C4" />
<rect x="1792" y="194" width="1.5" height="1.5" fill="#B8B8C4" />
<rect x="1796" y="186" width="1.5" height="1.5" fill="#B8B8C4" />
<rect x="1798" y="190" width="1.5" height="1.5" fill="#B8B8C4" />
<rect x="1796" y="194" width="1.5" height="1.5" fill="#B8B8C4" />
<rect x="1800" y="186" width="1.5" height="1.5" fill="#B8B8C4" />
<rect x="1802" y="190" width="1.5" height="1.5" fill="#B8B8C4" />
<rect x="1800" y="194" width="1.5" height="1.5" fill="#B8B8C4" />
<rect x="1804" y="186" width="1.5" height="1.5" fill="#B8B8C4" />
<rect x="1806" y="190" width="1.5" height="1.5" fill="#B8B8C4" />
<rect x="1804" y="194" width="1.5" height="1.5" fill="#B8B8C4" />
<rect x="1808" y="186" width="1.5" height="1.5" fill="#B8B8C4" />
<rect x="1810" y="190" width="1.5" height="1.5" fill="#B8B8C4" />
<rect x="1808" y="194" width="1.5" height="1.5" fill="#B8B8C4" />
<rect x="1812" y="186" width="1.5" height="1.5" fill="#B8B8C4" />
<rect x="1814" y="190" width="1.5" height="1.5" fill="#B8B8C4" />
<rect x="1812" y="194" width="1.5" height="1.5" fill="#B8B8C4" />
<rect x="1816" y="186" width="1.5" height="1.5" fill="#B8B8C4" />
<rect x="1818" y="190" width="1.5" height="1.5" fill="#B8B8C4" />
<rect x="1816" y="194" width="1.5" height="1.5" fill="#B8B8C4" />
<rect x="1820" y="186" width="1.5" height="1.5" fill="#B8B8C4" />
<rect x="1822" y="190" width="1.5" height="1.5" fill="#B8B8C4" />
<rect x="1820" y="194" width="1.5" height="1.5" fill="#B8B8C4" />
<path d="M1836 186 L1848 186 L1842 193 Z" fill="#1e1e1e"/>
<path d="M1863 183.5 L1871 183.5 M1864 183.5 L1864 191 M1870 183.5 L1870 191 M1862 191 L1872 191 M1867 191 L1867 198" stroke="#1e1e1e" stroke-width="1.8"/>
<path d="M1886 184 L1898 196 M1898 184 L1886 196" stroke="#1e1e1e" stroke-width="2"/>
<rect x="1559" y="209" width="351" height="36" fill="#EEEEF2" />
<circle cx="1580.5" cy="227.5" r="8.5" fill="#C9C9CC"/><path d="M1584 227.5 L1577 227.5 M1580 224 L1576.5 227.5 L1580 231" stroke="#EEEEF2" stroke-width="2" fill="none"/>
<circle cx="1612.5" cy="227.5" r="8.5" fill="#C9C9CC"/><path d="M1609 227.5 L1616 227.5 M1613 224 L1616.5 227.5 L1613 231" stroke="#EEEEF2" stroke-width="2" fill="none"/>
<path d="M1635 229 L1645 219 L1655 229 M1638 226 L1638 237 L1652 237 L1652 226" stroke="#1e1e1e" stroke-width="1.8" fill="none"/><rect x="1643" y="230" width="4" height="7" fill="#1e1e1e"/>
<rect x="1669" y="225" width="13" height="11" fill="none" stroke="#1e1e1e" stroke-width="1.8"/><path d="M1678 217 L1690 217 L1690 231 L1683 231 L1683 224 L1678 224 Z" fill="#DCB67A"/>
<path d="M1670 221 Q1672 216 1677 217 M1686 232 Q1686 236 1682 237" stroke="#1B6AC9" stroke-width="1.6" fill="none"/>
<path d="M1699.5 225 L1707.5 225 L1703.5 229 Z" fill="#717171"/>
<rect x="1718" y="214" width="1" height="28" fill="#CCCEDB" />
<circle cx="1744" cy="230" r="6.5" fill="none" stroke="#1e1e1e" stroke-width="1.6"/><path d="M1744 226 L1744 230 L1747 230" stroke="#1e1e1e" stroke-width="1.4" fill="none"/><path d="M1734 216 L1740 216 L1737 221 Z" fill="#1e1e1e"/>
<path d="M1762 225 L1770 225 L1766 229 Z" fill="#717171"/>
<path d="M1797 223 A 8 8 0 1 1 1790 220" stroke="#1B5CAB" stroke-width="2.8" fill="none"/><path d="M1787 215.5 L1796 220 L1788 225 Z" fill="#1B5CAB"/>
<rect x="1815" y="225" width="11" height="9" fill="none" stroke="#1e1e1e" stroke-width="1.6"/><path d="M1818 225 L1818 221 L1829 221 L1829 230 L1826 230 M1821 221 L1821 218 L1832 218 L1832 227 L1829 227" stroke="#1e1e1e" stroke-width="1.6" fill="none"/>
<path d="M1846 221 L1846 236 L1850 236 M1849 218 L1860 218 L1865 223 L1865 233 L1860 238 L1851 238 L1851 223 Z" stroke="#1e1e1e" stroke-width="1.6" fill="none"/><path d="M1854 228 L1861 228 M1854 231 L1861 231 M1854 234 L1861 234" stroke="#1e1e1e" stroke-width="1.2"/>
<rect x="1877" y="213" width="1" height="28" fill="#CCCEDB" />
<path d="M1897 212 L1900 215 L1897 218 M1903 212 L1906 215 L1903 218" stroke="#717171" stroke-width="1.2" fill="none"/>
<rect x="1559.5" y="249.5" width="350" height="30" fill="#FFFFFF" stroke="#DADAE2"/>
<text x="1566" y="271" font-family="'Liberation Sans', sans-serif" font-size="18" fill="#6D6D6D" textLength="253" lengthAdjust="spacingAndGlyphs" >Search Solution Explorer (Ctrl+;)</text>
<g stroke="#1e1e1e" fill="none"><circle cx="1882" cy="260.5" r="5.5" stroke-width="2.2"/><path d="M1878 265 L1871.5 271.5" stroke-width="3"/></g>
<path d="M1897 262 L1905 262 L1901 266 Z" fill="#424242"/>
<rect x="1559" y="286" width="327" height="27.5" fill="#CCCEDB" />
<defs><clipPath id="seclip"><rect x="1559" y="284" width="326" height="612"/></clipPath></defs>
<g clip-path="url(#seclip)">
<path d="M1656.8 294.4 L1663.5 300.4 L1656.8 306.4 Z" fill="none" stroke="#1e1e1e" stroke-width="1.6"/>
<path d="M1676 300.4 L1684 300.4 M1680 296.4 L1680 304.4" stroke="#3AAA35" stroke-width="2"/>
<text x="1689" y="305" font-family="'Liberation Sans', sans-serif" font-size="15" fill="#388A34" textLength="9.5" lengthAdjust="spacingAndGlyphs" font-weight="bold">C</text>
<text x="1699" y="301" font-family="'Liberation Sans', sans-serif" font-size="10" fill="#388A34" textLength="7" lengthAdjust="spacingAndGlyphs" font-weight="bold">#</text>
<text x="1716.5" y="307" font-family="'Liberation Sans', sans-serif" font-size="18" fill="#2A2A2A" textLength="268" lengthAdjust="spacingAndGlyphs" >IGetAllWithAllOthersRepository.cs</text>
<path d="M1656.8 321.96999999999997 L1663.5 327.96999999999997 L1656.8 333.96999999999997 Z" fill="none" stroke="#1e1e1e" stroke-width="1.6"/>
<path d="M1676 327.96999999999997 L1684 327.96999999999997 M1680 323.96999999999997 L1680 331.96999999999997" stroke="#3AAA35" stroke-width="2"/>
<text x="1689" y="333" font-family="'Liberation Sans', sans-serif" font-size="15" fill="#388A34" textLength="9.5" lengthAdjust="spacingAndGlyphs" font-weight="bold">C</text>
<text x="1699" y="329" font-family="'Liberation Sans', sans-serif" font-size="10" fill="#388A34" textLength="7" lengthAdjust="spacingAndGlyphs" font-weight="bold">#</text>
<text x="1716.5" y="334" font-family="'Liberation Sans', sans-serif" font-size="18" fill="#2A2A2A" textLength="247" lengthAdjust="spacingAndGlyphs" >IGetWithAllOthersRepository.cs</text>
<path d="M1656.8 349.53999999999996 L1663.5 355.53999999999996 L1656.8 361.53999999999996 Z" fill="none" stroke="#1e1e1e" stroke-width="1.6"/>
<path d="M1676 355.53999999999996 L1684 355.53999999999996 M1680 351.53999999999996 L1680 359.53999999999996" stroke="#3AAA35" stroke-width="2"/>
<text x="1689" y="361" font-family="'Liberation Sans', sans-serif" font-size="15" fill="#388A34" textLength="9.5" lengthAdjust="spacingAndGlyphs" font-weight="bold">C</text>
<text x="1699" y="357" font-family="'Liberation Sans', sans-serif" font-size="10" fill="#388A34" textLength="7" lengthAdjust="spacingAndGlyphs" font-weight="bold">#</text>
<text x="1716.5" y="362" font-family="'Liberation Sans', sans-serif" font-size="18" fill="#2A2A2A" textLength="270" lengthAdjust="spacingAndGlyphs" >IOnePkWithAllOthersRepository.cs</text>
<path d="M1656.8 377.11 L1663.5 383.11 L1656.8 389.11 Z" fill="none" stroke="#1e1e1e" stroke-width="1.6"/>
<path d="M1676 383.11 L1684 383.11 M1680 379.11 L1680 387.11" stroke="#3AAA35" stroke-width="2"/>
<text x="1689" y="388" font-family="'Liberation Sans', sans-serif" font-size="15" fill="#388A34" textLength="9.5" lengthAdjust="spacingAndGlyphs" font-weight="bold">C</text>
<text x="1699" y="384" font-family="'Liberation Sans', sans-serif" font-size="10" fill="#388A34" textLength="7" lengthAdjust="spacingAndGlyphs" font-weight="bold">#</text>
<text x="1716.5" y="390" font-family="'Liberation Sans', sans-serif" font-size="18" fill="#2A2A2A" textLength="109" lengthAdjust="spacingAndGlyphs" >IRepository.cs</text>
<path d="M1661 404.67999999999995 L1670 404.67999999999995 L1671 402.67999999999995 L1680 402.67999999999995 L1680 417.67999999999995 L1661 417.67999999999995 Z" fill="#DCB67A"/>
<text x="1690" y="417" font-family="'Liberation Sans', sans-serif" font-size="18" fill="#2A2A2A" textLength="123" lengthAdjust="spacingAndGlyphs" >ViewRepository</text>
<path d="M1650.0 437.25 L1650.0 435.25 Q1652.5 431.75 1655.0 435.25" stroke="#3C9BE0" stroke-width="1.4" fill="none"/><rect x="1648.5" y="437.25" width="8" height="6.5" fill="#3C9BE0"/><rect x="1651.7" y="439.25" width="1.6" height="2.5" fill="#fff"/>
<path d="M1664 430.25 L1674 430.25 L1679 435.25 L1679 446.25 L1666 446.25" stroke="#1e1e1e" stroke-width="1.4" fill="none"/>
<path d="M1659 434.25 L1659 438.25 Q1662 441.25 1665 438.25 L1665 434.25 M1662 439.25 L1662 447.25" stroke="#1e1e1e" stroke-width="2" fill="none"/>
<text x="1690" y="445" font-family="'Liberation Sans', sans-serif" font-size="18" fill="#2A2A2A" textLength="87" lengthAdjust="spacingAndGlyphs" >App.config</text>
<path d="M1650.0 464.82 L1650.0 462.82 Q1652.5 459.32 1655.0 462.82" stroke="#3C9BE0" stroke-width="1.4" fill="none"/><rect x="1648.5" y="464.82" width="8" height="6.5" fill="#3C9BE0"/><rect x="1651.7" y="466.82" width="1.6" height="2.5" fill="#fff"/>
<path d="M1664 457.82 L1674 457.82 L1679 462.82 L1679 473.82 L1666 473.82" stroke="#1e1e1e" stroke-width="1.4" fill="none"/>
<path d="M1659 461.82 L1659 465.82 Q1662 468.82 1665 465.82 L1665 461.82 M1662 466.82 L1662 474.82" stroke="#1e1e1e" stroke-width="2" fill="none"/>
<text x="1690" y="472" font-family="'Liberation Sans', sans-serif" font-size="18" fill="#2A2A2A" textLength="127" lengthAdjust="spacingAndGlyphs" >packages.config</text>
<path d="M1602.8 487.39 L1609.5 493.39 L1602.8 499.39 Z" fill="none" stroke="#1e1e1e" stroke-width="1.6"/>
<path d="M1623.0 492.39 L1623.0 490.39 Q1625.5 486.89 1628.0 490.39" stroke="#3C9BE0" stroke-width="1.4" fill="none"/><rect x="1621.5" y="492.39" width="8" height="6.5" fill="#3C9BE0"/><rect x="1624.7" y="494.39" width="1.6" height="2.5" fill="#fff"/>
<rect x="1631.8" y="485.39" width="21" height="17" fill="none" stroke="#3A8A35" stroke-width="1.6"/>
<text x="1634" y="497" font-family="'Liberation Sans', sans-serif" font-size="12" fill="#424242" textLength="15" lengthAdjust="spacingAndGlyphs" font-weight="bold">C#</text>
<text x="1663" y="500" font-family="'Liberation Sans', sans-serif" font-size="18" fill="#2A2A2A" textLength="126" lengthAdjust="spacingAndGlyphs" >Data.Repository</text>
<path d="M1585 515.96 L1585 525.96 L1575 525.96 Z" fill="#1e1e1e"/>
<path d="M1606 514.96 L1615 514.96 L1616 512.96 L1625 512.96 L1625 527.96 L1606 527.96 Z" fill="#DCB67A"/>
<path d="M1609 517.96 L1625 517.96 L1623 527.96 L1606 527.96 Z" fill="#F0D9A8"/>
<text x="1636.5" y="527" font-family="'Liberation Sans', sans-serif" font-size="18" fill="#2A2A2A" textLength="101" lengthAdjust="spacingAndGlyphs" >DataDomain</text>
<path d="M1612 543.53 L1612 553.53 L1602 553.53 Z" fill="#1e1e1e"/>
<path d="M1623.0 547.53 L1623.0 545.53 Q1625.5 542.03 1628.0 545.53" stroke="#3C9BE0" stroke-width="1.4" fill="none"/><rect x="1621.5" y="547.53" width="8" height="6.5" fill="#3C9BE0"/><rect x="1624.7" y="549.53" width="1.6" height="2.5" fill="#fff"/>
<rect x="1631.8" y="540.53" width="21" height="17" fill="none" stroke="#3A8A35" stroke-width="1.6"/>
<text x="1634" y="552" font-family="'Liberation Sans', sans-serif" font-size="12" fill="#424242" textLength="15" lengthAdjust="spacingAndGlyphs" font-weight="bold">C#</text>
<text x="1663" y="555" font-family="'Liberation Sans', sans-serif" font-size="18" fill="#2A2A2A" textLength="149" lengthAdjust="spacingAndGlyphs" >DataDomain.Entity</text>
<path d="M1630.3 570.0999999999999 L1637.0 576.0999999999999 L1630.3 582.0999999999999 Z" fill="none" stroke="#1e1e1e" stroke-width="1.6"/>
<path d="M1650.0 575.0999999999999 L1650.0 573.0999999999999 Q1652.5 569.5999999999999 1655.0 573.0999999999999" stroke="#3C9BE0" stroke-width="1.4" fill="none"/><rect x="1648.5" y="575.0999999999999" width="8" height="6.5" fill="#3C9BE0"/><rect x="1651.7" y="577.0999999999999" width="1.6" height="2.5" fill="#fff"/>
<path d="M1662 584.0999999999999 L1671 575.0999999999999" stroke="#1e1e1e" stroke-width="4.2" stroke-linecap="round"/><circle cx="1673.5" cy="572.5999999999999" r="6" fill="#1e1e1e"/><path d="M1673.5 572.5999999999999 L1674.5 565.0999999999999 L1681 571.5999999999999 Z" fill="#F5F5F5"/>
<text x="1690" y="583" font-family="'Liberation Sans', sans-serif" font-size="18" fill="#2A2A2A" textLength="80" lengthAdjust="spacingAndGlyphs" >Properties</text>
<path d="M1630.3 597.67 L1637.0 603.67 L1630.3 609.67 Z" fill="none" stroke="#1e1e1e" stroke-width="1.6"/>
<rect x="1659" y="600.67" width="5" height="6" fill="#424242"/><path d="M1664 603.67 L1670 603.67" stroke="#424242" stroke-width="1.6"/><rect x="1670" y="598.67" width="9" height="10" fill="#424242"/>
<text x="1690" y="610" font-family="'Liberation Sans', sans-serif" font-size="18" fill="#2A2A2A" textLength="86" lengthAdjust="spacingAndGlyphs" >References</text>
<path d="M1638 626.24 L1638 636.24 L1628 636.24 Z" fill="#1e1e1e"/>
<path d="M1661 625.24 L1670 625.24 L1671 623.24 L1680 623.24 L1680 638.24 L1661 638.24 Z" fill="#DCB67A"/>
<path d="M1664 628.24 L1680 628.24 L1678 638.24 L1661 638.24 Z" fill="#F0D9A8"/>
<text x="1690" y="638" font-family="'Liberation Sans', sans-serif" font-size="18" fill="#2A2A2A" textLength="44" lengthAdjust="spacingAndGlyphs" >Entity</text>
<path d="M1656.8 652.81 L1663.5 658.81 L1656.8 664.81 Z" fill="none" stroke="#1e1e1e" stroke-width="1.6"/>
<path d="M1677.0 657.81 L1677.0 655.81 Q1679.5 652.31 1682.0 655.81" stroke="#3C9BE0" stroke-width="1.4" fill="none"/><rect x="1675.5" y="657.81" width="8" height="6.5" fill="#3C9BE0"/><rect x="1678.7" y="659.81" width="1.6" height="2.5" fill="#fff"/>
<text x="1689" y="664" font-family="'Liberation Sans', sans-serif" font-size="15" fill="#388A34" textLength="9.5" lengthAdjust="spacingAndGlyphs" font-weight="bold">C</text>
<text x="1699" y="660" font-family="'Liberation Sans', sans-serif" font-size="10" fill="#388A34" textLength="7" lengthAdjust="spacingAndGlyphs" font-weight="bold">#</text>
<text x="1716.5" y="665" font-family="'Liberation Sans', sans-serif" font-size="18" fill="#2A2A2A" textLength="71" lengthAdjust="spacingAndGlyphs" >Gamer.cs</text>
<path d="M1656.8 680.38 L1663.5 686.38 L1656.8 692.38 Z" fill="none" stroke="#1e1e1e" stroke-width="1.6"/>
<path d="M1677.0 685.38 L1677.0 683.38 Q1679.5 679.88 1682.0 683.38" stroke="#3C9BE0" stroke-width="1.4" fill="none"/><rect x="1675.5" y="685.38" width="8" height="6.5" fill="#3C9BE0"/><rect x="1678.7" y="687.38" width="1.6" height="2.5" fill="#fff"/>
<text x="1689" y="691" font-family="'Liberation Sans', sans-serif" font-size="15" fill="#388A34" textLength="9.5" lengthAdjust="spacingAndGlyphs" font-weight="bold">C</text>
<text x="1699" y="687" font-family="'Liberation Sans', sans-serif" font-size="10" fill="#388A34" textLength="7" lengthAdjust="spacingAndGlyphs" font-weight="bold">#</text>
<text x="1716.5" y="693" font-family="'Liberation Sans', sans-serif" font-size="18" fill="#2A2A2A" textLength="119" lengthAdjust="spacingAndGlyphs" >GamerDetail.cs</text>
<path d="M1630.3 707.95 L1637.0 713.95 L1630.3 719.95 Z" fill="none" stroke="#1e1e1e" stroke-width="1.6"/>
<path d="M1661 707.95 L1670 707.95 L1671 705.95 L1680 705.95 L1680 720.95 L1661 720.95 Z" fill="#DCB67A"/>
<text x="1690" y="720" font-family="'Liberation Sans', sans-serif" font-size="18" fill="#2A2A2A" textLength="153" lengthAdjust="spacingAndGlyphs" >EntityConfiguration</text>
<path d="M1661 735.52 L1670 735.52 L1671 733.52 L1680 733.52 L1680 748.52 L1661 748.52 Z" fill="#DCB67A"/>
<text x="1690" y="748" font-family="'Liberation Sans', sans-serif" font-size="18" fill="#2A2A2A" textLength="161" lengthAdjust="spacingAndGlyphs" >EntityEqualCompare</text>
<path d="M1630.3 763.0899999999999 L1637.0 769.0899999999999 L1630.3 775.0899999999999 Z" fill="none" stroke="#1e1e1e" stroke-width="1.6"/>
<path d="M1661 763.0899999999999 L1670 763.0899999999999 L1671 761.0899999999999 L1680 761.0899999999999 L1680 776.0899999999999 L1661 776.0899999999999 Z" fill="#DCB67A"/>
<text x="1690" y="776" font-family="'Liberation Sans', sans-serif" font-size="18" fill="#2A2A2A" textLength="132" lengthAdjust="spacingAndGlyphs" >StoredProcedure</text>
<path d="M1661 790.66 L1670 790.66 L1671 788.66 L1680 788.66 L1680 803.66 L1661 803.66 Z" fill="#DCB67A"/>
<text x="1690" y="803" font-family="'Liberation Sans', sans-serif" font-size="18" fill="#2A2A2A" textLength="248.5" lengthAdjust="spacingAndGlyphs" >StoredProcedureEqualCompare</text>
<path d="M1661 818.23 L1670 818.23 L1671 816.23 L1680 816.23 L1680 831.23 L1661 831.23 Z" fill="#DCB67A"/>
<text x="1690" y="831" font-family="'Liberation Sans', sans-serif" font-size="18" fill="#2A2A2A" textLength="163" lengthAdjust="spacingAndGlyphs" >TableValuedFunction</text>
<path d="M1661 845.8 L1670 845.8 L1671 843.8 L1680 843.8 L1680 858.8 L1661 858.8 Z" fill="#DCB67A"/>
<text x="1690" y="858" font-family="'Liberation Sans', sans-serif" font-size="18" fill="#2A2A2A" textLength="280" lengthAdjust="spacingAndGlyphs" >TableValuedFunctionEqualCompare</text>
<path d="M1661 873.37 L1670 873.37 L1671 871.37 L1680 871.37 L1680 886.37 L1661 886.37 Z" fill="#DCB67A"/>
<text x="1690" y="886" font-family="'Liberation Sans', sans-serif" font-size="18" fill="#2A2A2A" textLength="82" lengthAdjust="spacingAndGlyphs" >ViewEntity</text>
</g>
<path d="M1892.5 303 L1899 296 L1905.5 303 Z" fill="#868999"/>
<rect x="1892" y="431" width="13" height="292" fill="#C2C3C9" />
<path d="M1892.5 878 L1899 885 L1905.5 878 Z" fill="#868999"/>
<path d="M1577 900 L1569 906.5 L1577 913 Z" fill="#868999"/>
<rect x="1584" y="900" width="210" height="13" fill="#C2C3C9" />
<path d="M1869.5 900 L1877.5 906.5 L1869.5 913 Z" fill="#868999"/>
<path d="M1736.5 919 L1736.5 948.5 L1793.5 948.5 L1793.5 919" fill="#F5F5F5" stroke="#DADAE2"/>
<path d="M1579 927 Q1586 925 1590 927 L1590 933 Q1588 941 1583 943 Q1579 938 1579 933 Z" fill="#1e1e1e"/><circle cx="1594" cy="940" r="4.5" fill="#3AAA35"/>
<path d="M1638 930 L1644 930" stroke="#424242" stroke-width="1.6"/><circle cx="1637" cy="930" r="2" fill="#424242"/><circle cx="1650" cy="933" r="5.5" fill="none" stroke="#1B6AC9" stroke-width="2"/><path d="M1646 937 L1642 944" stroke="#1B6AC9" stroke-width="2.2"/><path d="M1645 926 L1655 926 L1655 929" stroke="#424242" stroke-width="1.4" fill="none"/>
<path d="M1697 944 L1706 935" stroke="#1e1e1e" stroke-width="4.2" stroke-linecap="round"/><circle cx="1708.5" cy="932.5" r="6" fill="#1e1e1e"/><path d="M1708.5 932.5 L1709.5 925 L1716 931.5 Z" fill="#EEEEF2"/>
<path d="M1755.8 926 L1755.8 931 M1775.2 925 L1775.2 940.8 L1766 940.8" stroke="#1e1e1e" stroke-width="1.6" fill="none"/><rect x="1755" y="923" width="21" height="3.2" fill="#1e1e1e"/>
<g fill="#8A4FC8" fill-rule="evenodd"><path d="M1754 933 L1759.5 937.5 L1754 942 Z M1755.8 935.5 L1755.8 939.5 L1757.8 937.5 Z"/><path d="M1758 937.5 L1766 931 L1766 944 Z M1761.5 937.5 L1764.3 935 L1764.3 940 Z"/></g>
<circle cx="1819.5" cy="928.5" r="3.6" fill="#2d2d2d"/><circle cx="1829.5" cy="931.5" r="3.6" fill="#2d2d2d"/><path d="M1815 941 L1815 935.5 Q1819.5 933.5 1824 935.5 L1824 941 Z M1825 944 L1825 938 L1829.5 942 L1834 938 L1834 944 Z" fill="#2d2d2d"/>
<path d="M1874 929 L1880 924 L1886 929 L1880 934 Z" fill="#2d2d2d"/><path d="M1882 930 L1888 930 L1888 942 L1893 942 M1888 935 L1893 935" stroke="#2d2d2d" stroke-width="2" fill="none"/><path d="M1891 931.5 L1895 935 L1891 938.5 Z M1891 938.5 L1895 942 L1891 945.5 Z" fill="#2d2d2d"/>
<path d="M9 1007 L27 1007 L25 1022 L7 1022 Z" fill="none" stroke="#fff" stroke-width="1.6"/><path d="M12 1011 L22 1011 M11.5 1015 L19 1015 M11 1018.5 L17 1018.5" stroke="#fff" stroke-width="1.4"/>
<text x="42" y="1021" font-family="'Liberation Sans', sans-serif" font-size="18" fill="#FFFFFF" textLength="50" lengthAdjust="spacingAndGlyphs" >Ready</text>
<text x="666" y="1021" font-family="'Liberation Sans', sans-serif" font-size="18" fill="#FFFFFF" textLength="42" lengthAdjust="spacingAndGlyphs" >Ln 13</text>
<text x="803" y="1021" font-family="'Liberation Sans', sans-serif" font-size="18" fill="#FFFFFF" textLength="50" lengthAdjust="spacingAndGlyphs" >Col 86</text>
<text x="940" y="1021" font-family="'Liberation Sans', sans-serif" font-size="18" fill="#FFFFFF" textLength="44" lengthAdjust="spacingAndGlyphs" >Ch 86</text>
<text x="1144" y="1021" font-family="'Liberation Sans', sans-serif" font-size="18" fill="#FFFFFF" textLength="27" lengthAdjust="spacingAndGlyphs" >INS</text>
<path d="M1270.5 1022 L1270.5 1006 M1264.5 1012 L1270.5 1005.5 L1276.5 1012" stroke="#fff" stroke-width="2.2" fill="none"/>
<text x="1292" y="1021" font-family="'Liberation Sans', sans-serif" font-size="18" fill="#FFFFFF" textLength="9" lengthAdjust="spacingAndGlyphs" >0</text>
<path d="M1338 1022 L1340 1016 L1350 1006 L1353 1009 L1343 1019 Z" fill="#DDE6EE"/>
<text x="1366" y="1021" font-family="'Liberation Sans', sans-serif" font-size="18" fill="#FFFFFF" textLength="9" lengthAdjust="spacingAndGlyphs" >5</text>
<path d="M1420 1003 L1431 1014 L1420 1025 L1409 1014 Z" fill="#DDE6EE"/><path d="M1417 1009 L1421 1013 L1421 1020 M1421 1013 L1425 1017" stroke="#007ACC" stroke-width="1.4" fill="none"/>
<text x="1441" y="1021" font-family="'Liberation Sans', sans-serif" font-size="18" fill="#FFFFFF" textLength="37" lengthAdjust="spacingAndGlyphs" >KL01</text>
<path d="M1513 1006 L1523 1016 L1533 1006 M1523 1016 L1523 1024 M1513 1006 L1517 1006 M1513 1006 L1513 1010 M1533 1006 L1529 1006 M1533 1006 L1533 1010 M1520 1008 L1523 1011" stroke="#DDE6EE" stroke-width="2.2" fill="none"/>
<text x="1544" y="1021" font-family="'Liberation Sans', sans-serif" font-size="18" fill="#FFFFFF" textLength="208" lengthAdjust="spacingAndGlyphs" >KL/04B_NUnit_KL/00_Main</text>
<path d="M1762 1018 L1767.5 1012 L1773 1018 Z" fill="#fff"/>
<path d="M1812 1026 L1815 1012 L1830 1012 L1827 1026 Z" fill="none" stroke="#F0F0F0" stroke-width="1.6"/><path d="M1822 1003 L1825 1003 L1822 1020 L1819 1020 Z" fill="#F5A623"/>
<circle cx="1855" cy="1014.5" r="11" fill="#fff"/><circle cx="1855" cy="1014.5" r="9" fill="#1e1e1e"/><circle cx="1855" cy="1014.5" r="7" fill="#fff"/><path d="M1855 1008 L1855 1018 M1851 1015 L1855 1019.5 L1859 1015" stroke="#1e1e1e" stroke-width="2.4" fill="none"/>
<circle cx="1903" cy="1014.5" r="14" fill="#fff"/><circle cx="1903" cy="1014.5" r="12.5" fill="#2E9E3E"/><path d="M1896 1015 L1901 1021 L1910 1007" stroke="#fff" stroke-width="3.2" fill="none"/>
</svg>
</body></html>
